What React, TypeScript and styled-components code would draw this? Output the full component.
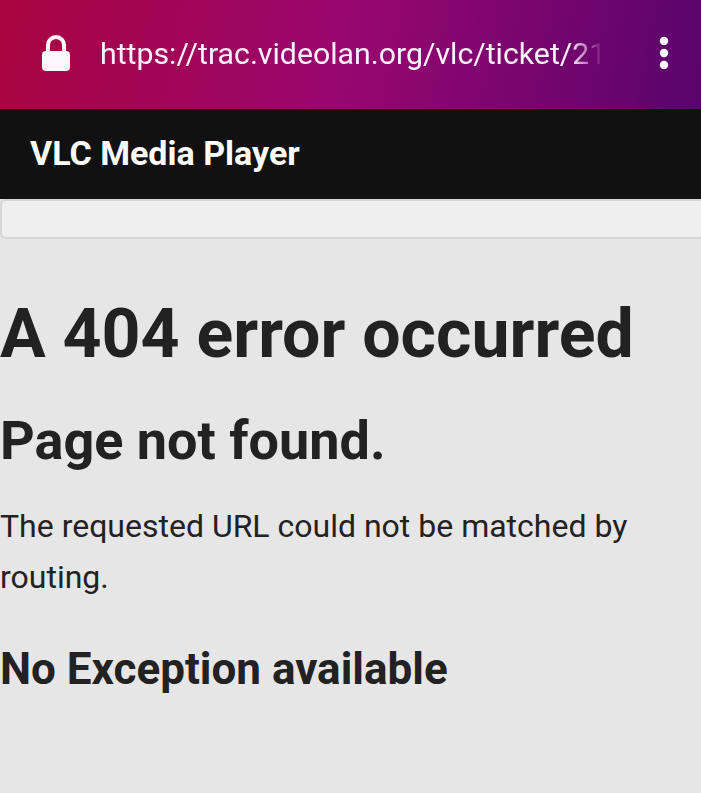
import React from "react";
import styled, { createGlobalStyle } from "styled-components";

const Global = createGlobalStyle`
  * { box-sizing: border-box; }
  body { margin: 0; background: #e6e6e6; font-family: Roboto, sans-serif; color: #222; overflow: hidden; }
`;
const Page = styled.div`
  height: 793px;
  overflow: hidden;
  background: #e6e6e6;
`;
const AddressBar = styled.header`
  height: 109px;
  display: flex;
  align-items: center;
  padding: 0 29px 3px 42px;
  background: linear-gradient(100deg, #ab0540 0%, #980670 50%, #58046c 100%);
`;
const Url = styled.div`
  margin-left: 30px;
  width: 505px;
  padding-top: 2px;
  white-space: nowrap;
  font-size: 30.25px;
  line-height: 40px;
  color: #fff2ff;
  mask-image: linear-gradient(to right, #000 470px, rgba(0, 0, 0, 0.1) 500px, transparent 500px);
`;
const MenuIcon = styled.svg`
  margin-left: auto;
`;
const TitleBar = styled.div`
  height: 90px;
  padding-left: 30px;
  background: #111;
  color: #fff;
  font-size: 34px;
  font-weight: 700;
  line-height: 88px;
`;
const SearchField = styled.div`
  height: 40px;
  margin-right: -10px;
  border: 2px solid #d6d6d6;
  border-radius: 6px;
  background: #efefef;
`;
const Content = styled.main`
  white-space: nowrap;
`;
const Heading = styled.h1`
  margin: 53px 0 0;
  font-size: 68px;
  line-height: 84px;
`;
const Subheading = styled.h2`
  margin: 31px 0 0;
  font-size: 54px;
  line-height: 68px;
`;
const Message = styled.p`
  margin: 26px 0 0;
  font-size: 32px;
  line-height: 51px;
`;
const Note = styled.h3`
  margin: 38px 0 0;
  font-size: 44px;
  line-height: 56px;
`;

export default function App() {
  return (
    <Page>
      <Global />
      <AddressBar>
        <svg width="28" height="36" viewBox="0 0 28 36">
          <rect y="16" width="28" height="20" rx="4" fill="#fbf7fb" />
          <path d="M6 18V10a8 8 0 0 1 16 0v8" fill="none" stroke="#fbf7fb" strokeWidth="4" />
        </svg>
        <Url>https://trac.videolan.org/vlc/ticket/21</Url>
        <MenuIcon width="16" height="40" viewBox="0 0 16 40" fill="#fff">
          <circle cx="8" cy="8" r="4.2" />
          <circle cx="8" cy="20" r="4.2" />
          <circle cx="8" cy="32" r="4.2" />
        </MenuIcon>
      </AddressBar>
      <TitleBar>VLC Media Player</TitleBar>
      <SearchField />
      <Content>
        <Heading>A 404 error occurred</Heading>
        <Subheading>Page not found.</Subheading>
        <Message>
          The requested URL could not be matched by
          <br />
          routing.
        </Message>
        <Note>No Exception available</Note>
      </Content>
    </Page>
  );
}
